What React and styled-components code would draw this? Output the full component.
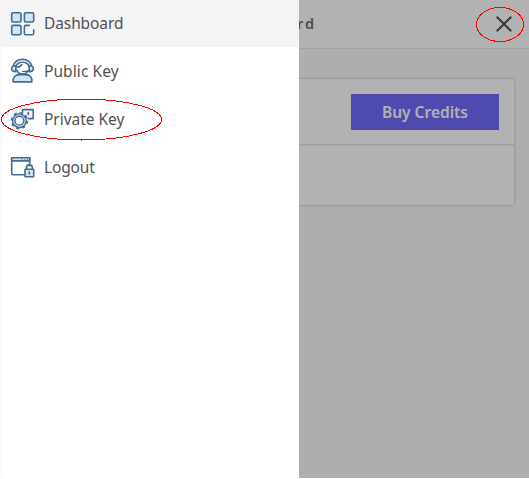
import React from "react";
import styled, { createGlobalStyle } from "styled-components";

const GlobalStyle = createGlobalStyle`
  * { box-sizing: border-box; }
  body { margin: 0; background: #fff; overflow: hidden; }
`;

const Screen = styled.div`
  position: relative;
  width: 529px;
  height: 479px;
  overflow: hidden;
  background: #fff;
  font-family: "Noto Sans", "Open Sans", sans-serif;
`;

const Page = styled.div`
  height: 478px;
  background: #f8fbfa;
`;

const Header = styled.header`
  display: flex;
  align-items: center;
  justify-content: flex-end;
  height: 49px;
  padding: 0 213px 2px 0;
  background: #fff;
  border-bottom: 1px solid #e4e8e7;
`;

const Title = styled.h1`
  margin: 0;
  font: 600 14.5px/22px "Noto Sans", sans-serif;
  letter-spacing: 2px;
  color: #6f6f75;
`;

const Content = styled.main`
  padding: 30px 15px 0;
`;

const Card = styled.section`
  height: 126px;
  background: #fff;
  box-shadow: 0 0 3px rgba(0, 0, 0, 0.25);
`;

const CardTop = styled.div`
  display: flex;
  justify-content: flex-end;
  height: 66px;
  padding: 15px 15px 0;
  border-bottom: 1px solid #e6e6e6;
  box-shadow: 0 1px 1px #f6f6f6;
`;

const BuyButton = styled.button`
  width: 148px;
  height: 36px;
  padding: 0;
  border: 0;
  background: #726bfb;
  color: #fff;
  font: 600 15.5px/36px "Noto Sans", sans-serif;
`;

const Backdrop = styled.div`
  position: absolute;
  inset: 0 0 1px;
  background: rgba(0, 0, 0, 0.3);
`;

const Drawer = styled.nav`
  position: absolute;
  top: 0;
  left: 0;
  width: 299px;
  height: 478px;
  background: linear-gradient(90deg, #fafafa, #fff 4px);
`;

const MenuItem = styled.a`
  display: flex;
  align-items: center;
  gap: 9px;
  height: ${(p) => p.$height}px;
  padding-left: 10px;
  background: ${(p) => (p.$active ? "#f4f4f4" : "transparent")};
  color: #515154;
  font-size: 15.5px;
  line-height: 22px;
  letter-spacing: ${(p) => p.$tracking}px;
`;

const Label = styled.span`
  padding-bottom: ${(p) => p.$lift}px;
`;

const Icon = styled.svg`
  width: 25px;
  height: 25px;
  flex: none;
  margin-bottom: ${(p) => p.$lift || 0}px;
  fill: #cfe6fa;
  stroke: #456a92;
  stroke-width: 1.6;
  stroke-linejoin: round;
  stroke-linecap: round;
`;

const CloseButton = styled.button`
  position: absolute;
  left: 494px;
  top: 14px;
  width: 20px;
  height: 20px;
  padding: 0;
  border: 0;
  background: none;
`;

const CloseIcon = styled.svg`
  display: block;
  fill: none;
  stroke: #3b3b3b;
  stroke-width: 2;
`;

const Marks = styled.svg`
  position: absolute;
  inset: 0;
  fill: none;
  stroke: #f00;
  stroke-width: 1;
  shape-rendering: crispEdges;
  pointer-events: none;
`;

const GridIcon = () => (
  <Icon viewBox="0 0 25 25">
    <rect x="1.7" y="1.7" width="9.3" height="9.3" rx="1.3" />
    <rect x="14.4" y="1.7" width="9.3" height="9.3" rx="1.3" />
    <rect x="1.7" y="14.4" width="9.3" height="9.3" rx="1.3" />
    <path fill="#eef6fc" stroke="none" d="M14.4 14.4h5v4h4v5.3h-9z" />
    <path fill="none" d="M19.3 14.4h-3.6q-1.3 0-1.3 1.3v6.7q0 1.3 1.3 1.3h6.7q1.3 0 1.3-1.3v-3.7" />
  </Icon>
);

const AgentIcon = () => (
  <Icon viewBox="0 0 25 25" $lift={2}>
    <path d="M3.2 8.5C4.2-1.2 20.8-1.2 21.8 8.5L19 8.8C18 3 7 3 6 8.8z" />
    <path d="M4.8 7.8C1.3 7.5.6 12.2 3.6 13.4l2.2.2V8zM20.2 7.8c3.5-.3 4.2 4.4 1.2 5.6l-2.2.2V8z" />
    <path fill="#fff" stroke="none" d="M7 8.5q2-3.5 5.5-3.5T18 8.5v2c0 7-11 7-11 0z" />
    <path fill="none" d="M6.8 9c2.5.2 3.9-.6 5-2.5M6.8 12c.9 3.2 3.2 4 5.7 4s4.7-1 5.5-3.5" />
    <path fill="none" strokeWidth="1.2" d="M18.5 13.3h-6" />
    <path d="M3.2 23.9c-.8-4.7 2.3-7.3 6.3-7.3h6c4 0 7.1 2.6 6.3 7.3z" />
  </Icon>
);

const GearRing = styled.circle`
  stroke-width: 1.4;
`;

const GearTeeth = styled.circle`
  fill: none;
  stroke-width: 1.9;
  stroke-linecap: butt;
  stroke-dasharray: 3.06;
`;

const GearIcon = () => (
  <Icon viewBox="0 0 25 25">
    <path d="M12.5 6V2.6h10.7v9h-5" fill="#eef6fc" />
    <path d="M18.3 5.6v1.8" />
    <GearTeeth cx="9.4" cy="13.7" r="7.8" />
    <GearRing cx="9.4" cy="13.7" r="6.8" />
    <GearRing cx="9.4" cy="13.7" r="4.4" fill="#fff" />
  </Icon>
);

const LockIcon = () => (
  <Icon viewBox="0 0 25 25">
    <path fill="#fff" d="M14.5 19.7H3q-1.3 0-1.3-1.3V2.7h18v8" />
    <path d="M1.7 2.7h18v3.2h-18z" />
    <path strokeWidth="1" d="M12 4.3h.2M14.7 4.3h.2M17.4 4.3h.2" />
    <path fill="none" d="M16.5 14.5v-2c0-3.5 5.8-3.5 5.8 0v2" />
    <rect x="15" y="14.2" width="8.7" height="7.5" rx=".5" />
    <path d="M19.3 17v2" />
  </Icon>
);

const items = [
  { label: "Dashboard", icon: GridIcon, active: true, height: 47, lift: 1, tracking: -0.1 },
  { label: "Public Key", icon: AgentIcon, height: 49, lift: 1, tracking: 0.08 },
  { label: "Private Key", icon: GearIcon, height: 46, lift: 1, tracking: -0.03 },
  { label: "Logout", icon: LockIcon, height: 50, lift: 1, tracking: -0.15 },
];

export default function App() {
  return (
    <Screen>
      <GlobalStyle />
      <Page>
        <Header>
          <Title>Dashboard</Title>
        </Header>
        <Content>
          <Card>
            <CardTop>
              <BuyButton>Buy Credits</BuyButton>
            </CardTop>
          </Card>
        </Content>
      </Page>
      <Backdrop />
      <Drawer>
        {items.map(({ label, icon: Glyph, active, height, lift, tracking }) => (
          <MenuItem key={label} $active={active} $height={height} $tracking={tracking}>
            <Glyph />
            <Label $lift={lift}>{label}</Label>
          </MenuItem>
        ))}
      </Drawer>
      <CloseButton aria-label="Close">
        <CloseIcon width="20" height="20" viewBox="0 0 20 20">
          <path d="M2.7 2.7 17.3 17.3M17.3 2.7 2.7 17.3" />
        </CloseIcon>
      </CloseButton>
      <Marks width="529" height="479">
        <ellipse cx="81.5" cy="119.5" rx="80" ry="20.5" />
        <ellipse cx="500" cy="24.5" rx="23.5" ry="17" />
      </Marks>
    </Screen>
  );
}
